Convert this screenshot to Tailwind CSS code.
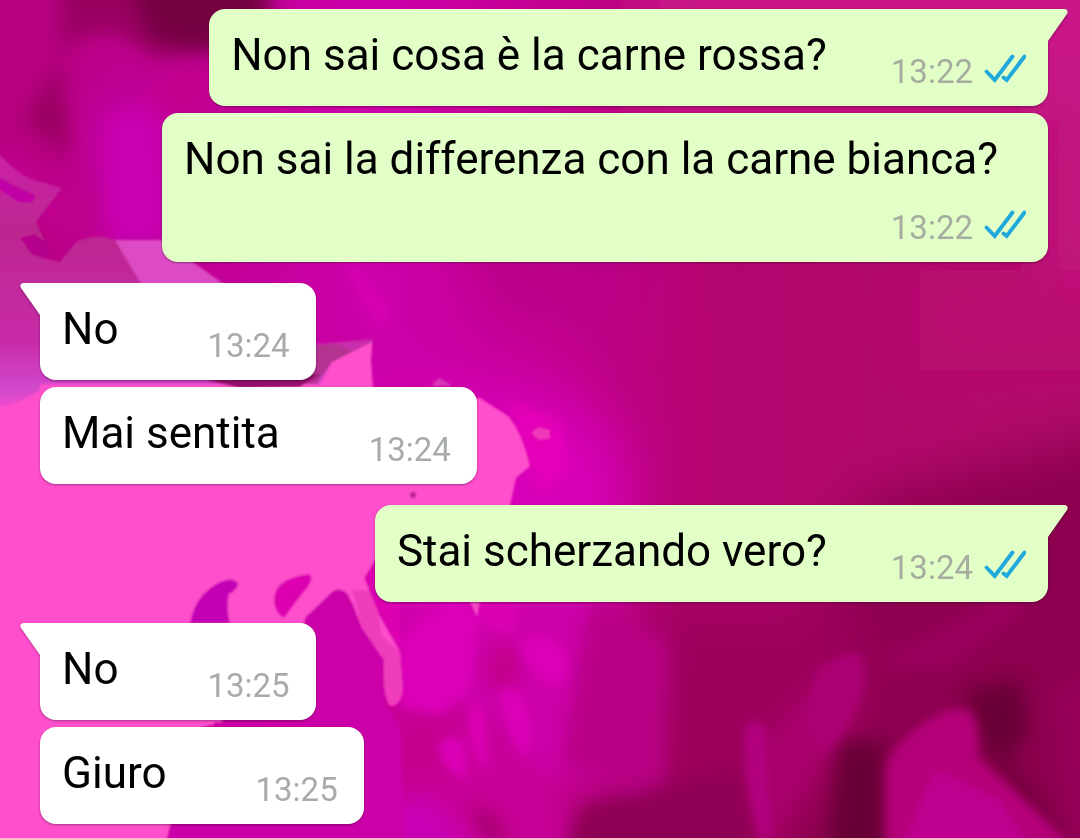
<!DOCTYPE html>
<html lang="it">

<head>
    <meta charset="UTF-8">
    <meta name="viewport" content="width=device-width, initial-scale=1.0">
    <title>Chat</title>
    <script src="https://cdn.jsdelivr.net/npm/@tailwindcss/browser@4"></script>
</head>

<body class="font-[Roboto,sans-serif] bg-[#b80080] text-black">

    <!-- Tick icon and bubble tail, reused by the messages -->
    <svg class="hidden">
        <symbol id="ticks" viewBox="0 0 42 36">
            <path d="M2.500 17.500L10.700 26L28.500 2.500M19.500 23.500L22.700 26L40.500 2.500" fill="none" stroke="#1fa8dc" stroke-width="3.800" stroke-linecap="round" stroke-linejoin="miter" />
        </symbol>
        <symbol id="tail" viewBox="0 0 20 34">
            <path d="M0 0H17Q21 1 19 5L0 32Z" fill="currentColor" />
        </symbol>
    </svg>

    <main class="relative isolate min-h-screen overflow-hidden">

        <!-- Wallpaper -->
        <svg class="absolute inset-0 -z-10 size-full" viewBox="0 0 1080 838" preserveAspectRatio="xMidYMid slice" aria-hidden="true">
            <defs>
                <filter id="b30" filterUnits="userSpaceOnUse" x="-150" y="-150" width="1380" height="1140"><feGaussianBlur stdDeviation="28" /></filter>
                <filter id="b10" filterUnits="userSpaceOnUse" x="-100" y="-100" width="1280" height="1040"><feGaussianBlur stdDeviation="10" /></filter>
                <filter id="b4" filterUnits="userSpaceOnUse" x="-50" y="-50" width="1180" height="940"><feGaussianBlur stdDeviation="5" /></filter>
                <filter id="b1" filterUnits="userSpaceOnUse" x="-50" y="-50" width="1180" height="940"><feGaussianBlur stdDeviation="1" /></filter>
                <linearGradient id="base" x1="0" x2="1" y1="0" y2="0">
                    <stop offset="0" stop-color="#b6007e" />
                    <stop offset=".35" stop-color="#cc00aa" />
                    <stop offset=".5" stop-color="#c40094" />
                    <stop offset=".66" stop-color="#b4046e" />
                    <stop offset="1" stop-color="#b00c6a" />
                </linearGradient>
                <linearGradient id="haze" x1="0" x2="0" y1="150" y2="420" gradientUnits="userSpaceOnUse">
                    <stop offset="0" stop-color="#cc20a8" />
                    <stop offset=".3" stop-color="#bc2890" />
                    <stop offset=".7" stop-color="#c82aa8" />
                    <stop offset=".88" stop-color="#d048cc" />
                    <stop offset="1" stop-color="#ff50cc" />
                </linearGradient>
            </defs>
            <rect width="1080" height="838" fill="url(#base)" />
            <!-- broad colour areas -->
            <g filter="url(#b30)">
                <path d="M640 -60H1160V120H640Z" fill="#c81288" />
                <path d="M1040 90H1160V300H1040Z" fill="#c41480" />
                <path d="M920 270H1160V370H920Z" fill="#bc1072" />
                <path d="M860 500L1160 420V940H700Q740 720 800 620Z" fill="#8c0450" />
                <path d="M640 600H860V740L700 940L600 940L620 760Z" fill="#9c005c" />
                <path d="M400 380L560 390L620 440L630 540L560 690L420 660Z" fill="#d800b8" />
                <path d="M300 620H400V900H180L200 760Z" fill="#c800a4" />
                <path d="M370 700H470V800H370Z" fill="#c4008c" />
                <path d="M95 90L170 120V250H110Z" fill="#c800b4" />
                <path d="M460 240H640V310H500Z" fill="#b80084" />
            </g>
            <g filter="url(#b10)">
                <path d="M60 -40H270V40L160 60L110 30L70 40L25 120L70 160L60 60Z" fill="#980060" />
                <path d="M120 -40H270V15L210 55L150 40Z" fill="#740042" />
                <path d="M0 140L60 190L90 180L100 230L60 240L0 190Z" fill="#c0008e" />
                <path d="M108 120L150 110L165 240H110Z" fill="#c800b2" />
                <path d="M160 80L210 60V110H160Z" fill="#c2008e" />
                <path d="M480 560L580 560L610 650L630 760L640 795L540 770L500 720L440 690Z" fill="#cc00a8" />
                <path d="M590 600L670 640L665 780L635 795L560 765Z" fill="#b80084" />
                <path d="M495 640L520 650L515 700L485 680Z" fill="#c20088" />
                <path d="M450 735L470 720L540 770L560 860H500Z" fill="#c80098" />
                <path d="M390 810L430 795L470 860H380Z" fill="#c800b4" />
                <path d="M470 800L500 820L510 860L480 830Z" fill="#a00060" />
                <path d="M580 805L650 790L740 770L755 870H560Z" fill="#8c0052" />
                <path d="M800 700L850 670L865 680L830 750L800 800L765 860L765 740Z" fill="#a8006c" />
                <path d="M838 740L885 740L885 880H825Z" fill="#680034" />
                <path d="M965 690L1020 680L1030 730L1000 770L980 740Z" fill="#680034" />
                <path d="M1010 595L1030 605L950 665L900 670L880 660Z" fill="#9c0060" />
                <path d="M985 740L1010 760L1080 860L1020 800Z" fill="#6c0038" />
                <path d="M1050 690L1120 660V900L1070 830Z" fill="#960458" />
            </g>
            <g filter="url(#b4)">
                <path d="M886 850V765Q900 735 935 716Q965 700 974 718Q980 735 978 758L1030 805L1075 850Z" fill="#b40078" />
                <path d="M900 850L935 770L1000 800L1030 850Z" fill="#c00090" />
                <path d="M815 675Q840 648 862 655Q868 685 850 720Q835 745 820 755Q800 720 815 675Z" fill="#ac0074" />
                <path d="M745 728Q752 715 766 728L772 838H760Q742 780 745 728Z" fill="#b40080" />
                <path d="M520 640Q555 625 568 660Q570 690 545 684Q522 665 520 640Z" fill="#dc00b8" />
                <path d="M438 745Q452 730 466 745L466 780Q445 775 438 745Z" fill="#dc00b8" />
                <path d="M500 690Q530 680 530 740L526 760Q504 735 500 690Z" fill="#dc00b8" />
                <path d="M468 705Q480 695 486 720L488 770Q470 765 468 705Z" fill="#dc00b4" />
                <path d="M398 640L450 600L480 610L470 690L440 715L400 706Z" fill="#dc00b8" />
                <path d="M480 600H520L515 632Q490 635 480 618Z" fill="#dc00b4" />
                <path d="M340 255L358 268L390 310L380 330L362 300Z" fill="#d800b4" />
                <path d="M508 400L560 420L570 470L540 490L528 460Z" fill="#e400b8" />
            </g>
            <!-- ink cloud on the left -->
            <g filter="url(#b1)">
                <path d="M-5 150Q18 175 34 180L62 188L48 206L36 222L44 240L30 250L42 258L60 262L76 242Q95 232 115 240H160L225 285L316 344L373 339L371 362L373 390L-5 420Z" fill="url(#haze)" />
                <path d="M115 240H162L225 285H142Z" fill="#dc4cc4" />
                <path d="M-5 176L36 196L32 203L18 202L0 190Z" fill="#c000a4" />
                <path d="M20 238L35 234L52 248L44 259L32 254Z" fill="#b4008c" />
                <path d="M310 346L335 344L355 352L330 364L316 384H300Z" fill="#b43090" />
                <path d="M-5 408Q20 404 40 390V384H320L332 362L352 352L372 342L371 362L373 390L480 398L508 416Q522 432 530 466L516 478L510 506L420 550L376 562L370 578L376 610L400 652L403 690Q400 706 391 706Q383 702 384 660L362 628L352 602Q340 585 332 592L305 618L300 640L220 723L200 728L166 850H-5Z" fill="#ff50cc" />
                <path d="M305 618L330 594Q338 585 348 594L362 628L384 660V705L400 725L405 850H164Q176 790 215 722H300Z" fill="#cc00a8" />
                <path d="M352 590L374 590L382 636L400 652L403 690Q400 706 391 706Q383 702 384 660L362 628Z" fill="#f03cbc" />
                <path d="M190 624Q194 596 218 583Q232 576 238 583Q238 590 229 594Q226 606 230 624Z" fill="#c400b4" />
                <path d="M274 600Q274 578 310 574Q315 580 302 594L284 618Q274 612 274 600Z" fill="#dc00b0" />
                <path d="M376 558L364 578L380 616L400 650L400 596L376 596Z" fill="#dc00b0" />
                <path d="M205 380L320 374L300 387L240 388Z" fill="#94106c" />
                <path d="M531 433L538 427L550 430V439L538 440Z" fill="#f038b8" />
                <path d="M434 382L440 378L452 386H432Z" fill="#d838b4" />
                <circle cx="413" cy="495" r="3" fill="#b82090" />
                <path d="M470 602L480 602L477 617Z" fill="#f448c4" />
            </g>
        </svg>

        <ul class="flex flex-col gap-[7px] pt-[9px] pb-3 pl-10 pr-8 text-[44px] leading-[52px]">

            <li class="relative flex self-end rounded-2xl rounded-tr-none bg-[#e1ffc7] pt-5 pb-[14px] px-[22px] drop-shadow-[0_1px_1px_rgba(0,0,0,0.35)]">
                <p class="mb-[11px]">Non sai cosa è la carne rossa?</p>
                <div class="ml-16 flex items-center gap-[11px] self-end text-[33px] leading-10 text-[#a6ada0]">
                    <time>13:22</time>
                    <svg class="h-9 w-[42px]" role="img" aria-label="Letto"><use href="#ticks" /></svg>
                </div>
                <svg class="absolute left-full top-0 h-[34px] w-5 text-[#e1ffc7]" aria-hidden="true"><use href="#tail" /></svg>
            </li>

            <li class="flex flex-col self-end rounded-2xl bg-[#e1ffc7] pt-5 pb-[14px] px-[22px] drop-shadow-[0_1px_1px_rgba(0,0,0,0.35)]">
                <p class="mb-[23px] mr-7">Non sai la differenza con la carne bianca?</p>
                <div class="flex items-center gap-[11px] self-end text-[33px] leading-10 text-[#a6ada0]">
                    <time>13:22</time>
                    <svg class="h-9 w-[42px]" role="img" aria-label="Letto"><use href="#ticks" /></svg>
                </div>
            </li>

            <li class="relative mt-[14px] flex self-start rounded-2xl rounded-tl-none bg-white pt-5 pb-[14px] pl-[22px] pr-[26px] drop-shadow-[0_1px_1px_rgba(0,0,0,0.35)]">
                <p class="mb-[11px]">No</p>
                <time class="ml-[89px] self-end text-[33px] leading-10 text-[#a8abad]">13:24</time>
                <svg class="absolute right-full top-0 h-[34px] w-5 -scale-x-100 text-white" aria-hidden="true"><use href="#tail" /></svg>
            </li>

            <li class="flex self-start rounded-2xl bg-white pt-5 pb-[14px] pl-[22px] pr-[26px] drop-shadow-[0_1px_1px_rgba(0,0,0,0.35)]">
                <p class="mb-[11px]">Mai sentita</p>
                <time class="ml-[89px] self-end text-[33px] leading-10 text-[#a8abad]">13:24</time>
            </li>

            <li class="relative mt-[14px] flex self-end rounded-2xl rounded-tr-none bg-[#e1ffc7] pt-5 pb-[14px] px-[22px] drop-shadow-[0_1px_1px_rgba(0,0,0,0.35)]">
                <p class="mb-[11px]">Stai scherzando vero?</p>
                <div class="ml-16 flex items-center gap-[11px] self-end text-[33px] leading-10 text-[#a6ada0]">
                    <time>13:24</time>
                    <svg class="h-9 w-[42px]" role="img" aria-label="Letto"><use href="#ticks" /></svg>
                </div>
                <svg class="absolute left-full top-0 h-[34px] w-5 text-[#e1ffc7]" aria-hidden="true"><use href="#tail" /></svg>
            </li>

            <li class="relative mt-[14px] flex self-start rounded-2xl rounded-tl-none bg-white pt-5 pb-[14px] pl-[22px] pr-[26px] drop-shadow-[0_1px_1px_rgba(0,0,0,0.35)]">
                <p class="mb-[11px]">No</p>
                <time class="ml-[89px] self-end text-[33px] leading-10 text-[#a8abad]">13:25</time>
                <svg class="absolute right-full top-0 h-[34px] w-5 -scale-x-100 text-white" aria-hidden="true"><use href="#tail" /></svg>
            </li>

            <li class="flex self-start rounded-2xl bg-white pt-5 pb-[14px] pl-[22px] pr-[26px] drop-shadow-[0_1px_1px_rgba(0,0,0,0.35)]">
                <p class="mb-[11px]">Giuro</p>
                <time class="ml-[89px] self-end text-[33px] leading-10 text-[#a8abad]">13:25</time>
            </li>
        </ul>

    </main>

</body>

</html>
